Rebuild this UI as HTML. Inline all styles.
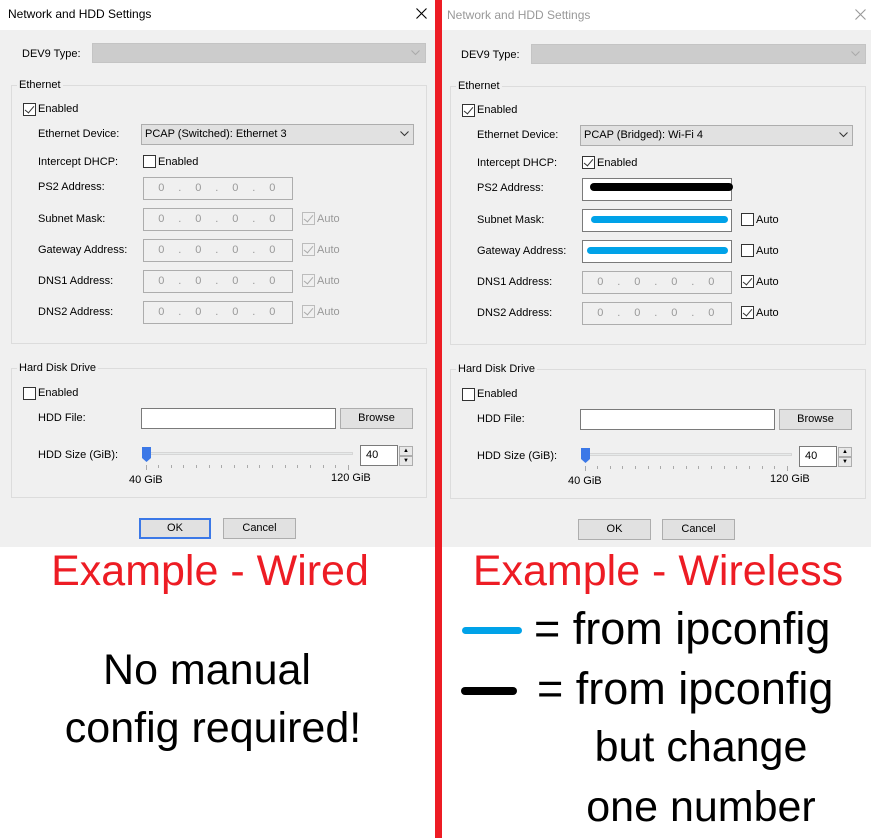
<!DOCTYPE html>
<html><head><meta charset="utf-8"><style>
*{margin:0;padding:0;box-sizing:border-box}
body{width:871px;height:838px;background:#fff;position:relative;overflow:hidden;font-family:"Liberation Sans",sans-serif;font-size:11px;color:#000}
.dlg{position:absolute;top:0;width:435px;height:547px;background:#f0f0f0}
.a{position:absolute;white-space:nowrap}
.tb{position:absolute;left:0;top:0;width:100%;height:30px;background:#fff}
.gb{position:absolute;border:1px solid #dcdcdc}
.gl{position:absolute;background:#f0f0f0;padding:0 2px}
.cb{position:absolute;width:13px;height:13px;border:1px solid #333;background:#fff}
.cb.dis{border-color:#bcbcbc;background:#f0f0f0}
.ck::after{content:"";position:absolute;left:3px;top:0;width:4px;height:8px;border:solid #333;border-width:0 1.5px 1.5px 0;transform:rotate(40deg)}
.cb.dis.ck::after{border-color:#aaa}
.ip{position:absolute;width:150px;height:23px;border:1px solid #adadad;background:#f0f0f0;color:#999;padding:4px 0 0 8px}
.ip i{font-style:normal;display:inline-block;width:18.5px;text-align:center}
.ip.w{background:#fff;border-color:#7a7a7a}
.btn{position:absolute;height:21px;background:#e1e1e1;border:1px solid #adadad;text-align:center;line-height:19px}
.big{position:absolute;font-size:43px;white-space:nowrap}
.ln{position:absolute;height:7px;border-radius:4px}
</style></head><body>

<!-- LEFT DIALOG -->
<div class="dlg" style="left:0">
<div class="tb"></div>
<div class="a" style="left:8px;top:7px;font-size:12px">Network and HDD Settings</div>
<svg class="a" style="left:416px;top:8px" width="11" height="11"><path d="M0.5 0.5L10.5 10.5M10.5 0.5L0.5 10.5" stroke="#000" stroke-width="1.1"/></svg>
<div class="a" style="left:22px;top:48px">DEV9 Type:</div>
<div class="a" style="left:92px;top:43px;width:334px;height:20px;background:#ccc;border:1px solid #c4c4c4"></div>
<svg class="a" style="left:411px;top:50px" width="9" height="6"><path d="M0.5 0.5L4.5 4.5L8.5 0.5" stroke="#aaa" fill="none"/></svg>
<div class="gb" style="left:11px;top:85px;width:416px;height:259px"></div>
<div class="gl" style="left:17px;top:79px">Ethernet</div>
<div class="cb ck" style="left:23px;top:103px"></div><div class="a" style="left:38px;top:103px">Enabled</div>
<div class="a" style="left:38px;top:128px">Ethernet Device:</div>
<div class="a" style="left:141px;top:124px;width:273px;height:21px;background:#e1e1e1;border:1px solid #adadad;padding:3px 0 0 3px">PCAP (Switched): Ethernet 3</div>
<svg class="a" style="left:400px;top:131px" width="9" height="6"><path d="M0.5 0.5L4.5 4.5L8.5 0.5" stroke="#333" fill="none"/></svg>
<div class="a" style="left:38px;top:156px">Intercept DHCP:</div>
<div class="cb" style="left:143px;top:155px"></div><div class="a" style="left:158px;top:156px">Enabled</div>
<div class="a" style="left:38px;top:181px">PS2 Address:</div>
<div class="ip a" style="left:143px;top:177px"><i>0</i><i>.</i><i>0</i><i>.</i><i>0</i><i>.</i><i>0</i></div>
<div class="a" style="left:38px;top:213px">Subnet Mask:</div>
<div class="ip a" style="left:143px;top:208px"><i>0</i><i>.</i><i>0</i><i>.</i><i>0</i><i>.</i><i>0</i></div>
<div class="cb dis ck" style="left:302px;top:212px"></div><div class="a" style="left:317px;top:213px;color:#999">Auto</div>
<div class="a" style="left:38px;top:244px">Gateway Address:</div>
<div class="ip a" style="left:143px;top:239px"><i>0</i><i>.</i><i>0</i><i>.</i><i>0</i><i>.</i><i>0</i></div>
<div class="cb dis ck" style="left:302px;top:243px"></div><div class="a" style="left:317px;top:244px;color:#999">Auto</div>
<div class="a" style="left:38px;top:275px">DNS1 Address:</div>
<div class="ip a" style="left:143px;top:270px"><i>0</i><i>.</i><i>0</i><i>.</i><i>0</i><i>.</i><i>0</i></div>
<div class="cb dis ck" style="left:302px;top:274px"></div><div class="a" style="left:317px;top:275px;color:#999">Auto</div>
<div class="a" style="left:38px;top:306px">DNS2 Address:</div>
<div class="ip a" style="left:143px;top:301px"><i>0</i><i>.</i><i>0</i><i>.</i><i>0</i><i>.</i><i>0</i></div>
<div class="cb dis ck" style="left:302px;top:305px"></div><div class="a" style="left:317px;top:306px;color:#999">Auto</div>
<div class="gb" style="left:11px;top:368px;width:416px;height:130px"></div>
<div class="gl" style="left:17px;top:362px">Hard Disk Drive</div>
<div class="cb" style="left:23px;top:387px"></div><div class="a" style="left:38px;top:387px">Enabled</div>
<div class="a" style="left:38px;top:412px">HDD File:</div>
<div class="a" style="left:141px;top:408px;width:195px;height:21px;background:#fff;border:1px solid #7a7a7a"></div>
<div class="btn" style="left:340px;top:408px;width:73px">Browse</div>
<div class="a" style="left:38px;top:449px">HDD Size (GiB):</div>
<div class="a" style="left:147px;top:452px;width:206px;height:3px;background:#e7eaea;border:1px solid #d6d6d6"></div>
<svg class="a" style="left:142px;top:447px" width="9" height="15"><path d="M0 0H9V11L4.5 15L0 11Z" fill="#3b78e7"/></svg>
<svg class="a" style="left:146px;top:465px" width="210" height="5"><g stroke="#aaa"><path d="M0.5 0V5M12.5 0V3M25.5 0V3M37.5 0V3M50.5 0V3M63.5 0V3M75.5 0V3M88.5 0V3M101.5 0V3M113.5 0V3M126.5 0V3M139.5 0V3M151.5 0V3M164.5 0V3M177.5 0V3M189.5 0V3M202.5 0V5"/></g></svg>
<div class="a" style="left:129px;top:474px">40 GiB</div>
<div class="a" style="left:331px;top:472px">120 GiB</div>
<div class="a" style="left:360px;top:445px;width:38px;height:21px;background:#fff;border:1px solid #7a7a7a;padding:3px 0 0 5px">40</div>
<div class="a" style="left:399px;top:446px;width:14px;height:10px;background:#e8e8e8;border:1px solid #adadad;font-size:6px;text-align:center;line-height:8px">▲</div>
<div class="a" style="left:399px;top:456px;width:14px;height:10px;background:#e8e8e8;border:1px solid #adadad;font-size:6px;text-align:center;line-height:8px">▼</div>
<div class="btn" style="left:139px;top:518px;width:72px;border:2px solid #3b78e7;line-height:17px">OK</div>
<div class="btn" style="left:223px;top:518px;width:73px">Cancel</div>
</div>

<!-- RED DIVIDER -->
<div class="a" style="left:435px;top:0;width:7px;height:838px;background:#ed1c24"></div>

<!-- RIGHT DIALOG -->
<div class="dlg" style="left:442px;width:429px">
<div class="tb"></div>
<div class="a" style="left:5px;top:8px;font-size:12px;color:#999">Network and HDD Settings</div>
<svg class="a" style="left:413px;top:9px" width="11" height="11"><path d="M0.5 0.5L10.5 10.5M10.5 0.5L0.5 10.5" stroke="#999" stroke-width="1.1"/></svg>
<div class="a" style="left:19px;top:49px">DEV9 Type:</div>
<div class="a" style="left:89px;top:44px;width:335px;height:20px;background:#ccc;border:1px solid #c4c4c4"></div>
<svg class="a" style="left:409px;top:51px" width="9" height="6"><path d="M0.5 0.5L4.5 4.5L8.5 0.5" stroke="#aaa" fill="none"/></svg>
<div class="gb" style="left:8px;top:86px;width:416px;height:259px"></div>
<div class="gl" style="left:14px;top:80px">Ethernet</div>
<div class="cb ck" style="left:20px;top:104px"></div><div class="a" style="left:35px;top:104px">Enabled</div>
<div class="a" style="left:35px;top:129px">Ethernet Device:</div>
<div class="a" style="left:138px;top:125px;width:273px;height:21px;background:#e1e1e1;border:1px solid #adadad;padding:3px 0 0 3px">PCAP (Bridged): Wi-Fi 4</div>
<svg class="a" style="left:397px;top:132px" width="9" height="6"><path d="M0.5 0.5L4.5 4.5L8.5 0.5" stroke="#333" fill="none"/></svg>
<div class="a" style="left:35px;top:157px">Intercept DHCP:</div>
<div class="cb ck" style="left:140px;top:156px"></div><div class="a" style="left:155px;top:157px">Enabled</div>
<div class="a" style="left:35px;top:182px">PS2 Address:</div>
<div class="ip a w" style="left:140px;top:178px"></div>
<div class="ln" style="left:148px;top:183px;width:143px;height:8px;background:#000"></div>
<div class="a" style="left:35px;top:214px">Subnet Mask:</div>
<div class="ip a w" style="left:140px;top:209px"></div>
<div class="ln" style="left:149px;top:216px;width:137px;background:#00a2e8"></div>
<div class="cb" style="left:299px;top:213px"></div><div class="a" style="left:314px;top:214px">Auto</div>
<div class="a" style="left:35px;top:245px">Gateway Address:</div>
<div class="ip a w" style="left:140px;top:240px"></div>
<div class="ln" style="left:145px;top:247px;width:141px;background:#00a2e8"></div>
<div class="cb" style="left:299px;top:244px"></div><div class="a" style="left:314px;top:245px">Auto</div>
<div class="a" style="left:35px;top:276px">DNS1 Address:</div>
<div class="ip a" style="left:140px;top:271px"><i>0</i><i>.</i><i>0</i><i>.</i><i>0</i><i>.</i><i>0</i></div>
<div class="cb ck" style="left:299px;top:275px"></div><div class="a" style="left:314px;top:276px">Auto</div>
<div class="a" style="left:35px;top:307px">DNS2 Address:</div>
<div class="ip a" style="left:140px;top:302px"><i>0</i><i>.</i><i>0</i><i>.</i><i>0</i><i>.</i><i>0</i></div>
<div class="cb ck" style="left:299px;top:306px"></div><div class="a" style="left:314px;top:307px">Auto</div>
<div class="gb" style="left:8px;top:369px;width:416px;height:130px"></div>
<div class="gl" style="left:14px;top:363px">Hard Disk Drive</div>
<div class="cb" style="left:20px;top:388px"></div><div class="a" style="left:35px;top:388px">Enabled</div>
<div class="a" style="left:35px;top:413px">HDD File:</div>
<div class="a" style="left:138px;top:409px;width:195px;height:21px;background:#fff;border:1px solid #7a7a7a"></div>
<div class="btn" style="left:337px;top:409px;width:73px">Browse</div>
<div class="a" style="left:35px;top:450px">HDD Size (GiB):</div>
<div class="a" style="left:144px;top:453px;width:206px;height:3px;background:#e7eaea;border:1px solid #d6d6d6"></div>
<svg class="a" style="left:139px;top:448px" width="9" height="15"><path d="M0 0H9V11L4.5 15L0 11Z" fill="#3b78e7"/></svg>
<svg class="a" style="left:143px;top:466px" width="210" height="5"><g stroke="#aaa"><path d="M0.5 0V5M12.5 0V3M25.5 0V3M37.5 0V3M50.5 0V3M63.5 0V3M75.5 0V3M88.5 0V3M101.5 0V3M113.5 0V3M126.5 0V3M139.5 0V3M151.5 0V3M164.5 0V3M177.5 0V3M189.5 0V3M202.5 0V5"/></g></svg>
<div class="a" style="left:126px;top:475px">40 GiB</div>
<div class="a" style="left:328px;top:473px">120 GiB</div>
<div class="a" style="left:357px;top:446px;width:38px;height:21px;background:#fff;border:1px solid #7a7a7a;padding:3px 0 0 5px">40</div>
<div class="a" style="left:396px;top:447px;width:14px;height:10px;background:#e8e8e8;border:1px solid #adadad;font-size:6px;text-align:center;line-height:8px">▲</div>
<div class="a" style="left:396px;top:457px;width:14px;height:10px;background:#e8e8e8;border:1px solid #adadad;font-size:6px;text-align:center;line-height:8px">▼</div>
<div class="btn" style="left:136px;top:519px;width:73px">OK</div>
<div class="btn" style="left:220px;top:519px;width:73px">Cancel</div>
</div>

<!-- BOTTOM TEXT -->
<div class="big" style="left:0;width:420px;top:547px;text-align:center;color:#ed1c24">Example - Wired</div>
<div class="big" style="left:0;width:414px;top:646px;text-align:center">No manual</div>
<div class="big" style="left:0;width:426px;top:704px;text-align:center">config required!</div>
<div class="big" style="left:442px;width:432px;top:547px;text-align:center;color:#ed1c24">Example - Wireless</div>
<div class="ln" style="left:462px;top:627px;width:60px;background:#00a2e8"></div>
<div class="big" style="left:534px;top:603px;font-size:45px">= from ipconfig</div>
<div class="ln" style="left:461px;top:687px;width:56px;height:8px;background:#000"></div>
<div class="big" style="left:537px;top:663px;font-size:45px">= from ipconfig</div>
<div class="big" style="left:441px;width:520px;top:723px;text-align:center">but change</div>
<div class="big" style="left:441px;width:520px;top:783px;text-align:center">one number</div>
</body></html>
